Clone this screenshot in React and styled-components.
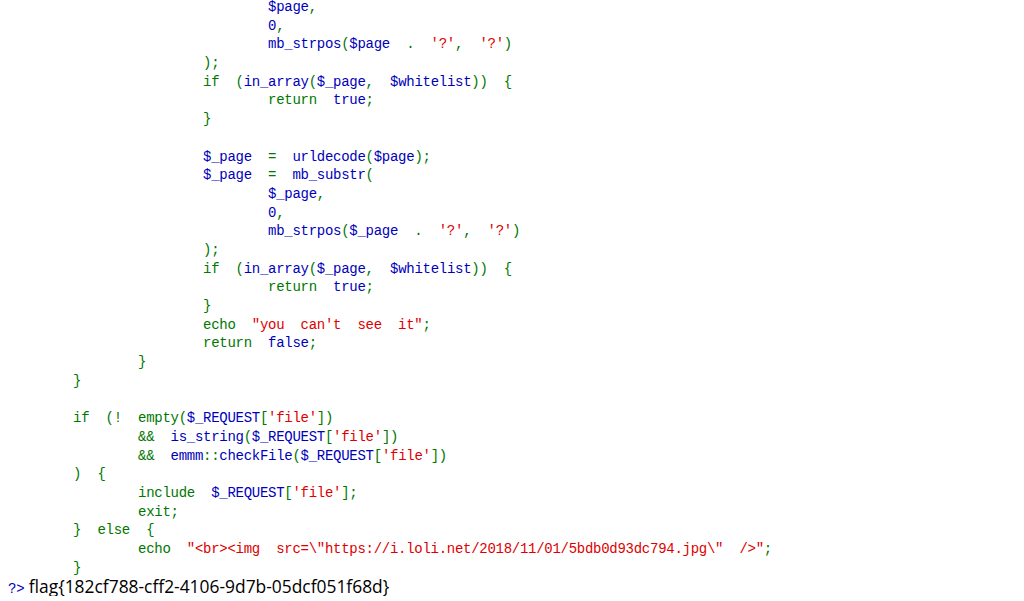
import React from "react";
import styled, { createGlobalStyle } from "styled-components";

const GlobalStyle = createGlobalStyle`
  html, body {
    margin: 0;
    padding: 0;
    background: #ffffff;
    overflow: hidden;
  }
`;

const Page = styled.div`
  padding: 0 8px;
  margin-top: -2px;
`;

const Code = styled.code`
  display: block;
  font-family: "Liberation Mono", "DejaVu Sans Mono", monospace;
  font-size: 14px;
  letter-spacing: -0.275px;
  line-height: 18.7px;
  white-space: pre;
  color: #000000;
`;

const Line = styled.div`
  height: 18.7px;
`;

const COLORS = {
  g: "#007700",
  b: "#0000bb",
  r: "#dd0000",
};

const Token = styled.span`
  color: ${(p) => COLORS[p.$c]};
`;

const Flag = styled.span`
  font-family: "Open Sans", "Noto Sans", sans-serif;
  font-size: 17.4px;
  letter-spacing: 0;
  color: #000000;
  white-space: normal;
`;

const REQ = [["b", "$_REQUEST"], ["g", "["], ["r", "'file'"], ["g", "])"]];

const lines = [
  [4, [["b", "$page"], ["g", ","]]],
  [4, [["b", "0"], ["g", ","]]],
  [4, [["b", "mb_strpos"], ["g", "("], ["b", "$page "], ["g", ". "], ["r", "'?'"], ["g", ", "], ["r", "'?'"], ["g", ")"]]],
  [3, [["g", ");"]]],
  [3, [["g", "if ("], ["b", "in_array"], ["g", "("], ["b", "$_page"], ["g", ", "], ["b", "$whitelist"], ["g", ")) {"]]],
  [4, [["g", "return "], ["b", "true"], ["g", ";"]]],
  [3, [["g", "}"]]],
  [0, []],
  [3, [["b", "$_page "], ["g", "= "], ["b", "urldecode"], ["g", "("], ["b", "$page"], ["g", ");"]]],
  [3, [["b", "$_page "], ["g", "= "], ["b", "mb_substr"], ["g", "("]]],
  [4, [["b", "$_page"], ["g", ","]]],
  [4, [["b", "0"], ["g", ","]]],
  [4, [["b", "mb_strpos"], ["g", "("], ["b", "$_page "], ["g", ". "], ["r", "'?'"], ["g", ", "], ["r", "'?'"], ["g", ")"]]],
  [3, [["g", ");"]]],
  [3, [["g", "if ("], ["b", "in_array"], ["g", "("], ["b", "$_page"], ["g", ", "], ["b", "$whitelist"], ["g", ")) {"]]],
  [4, [["g", "return "], ["b", "true"], ["g", ";"]]],
  [3, [["g", "}"]]],
  [3, [["g", "echo "], ["r", "\"you can't see it\""], ["g", ";"]]],
  [3, [["g", "return "], ["b", "false"], ["g", ";"]]],
  [2, [["g", "}"]]],
  [1, [["g", "}"]]],
  [0, []],
  [1, [["g", "if (! empty("], ...REQ]],
  [2, [["g", "&& "], ["b", "is_string"], ["g", "("], ...REQ]],
  [2, [["g", "&& "], ["b", "emmm"], ["g", "::"], ["b", "checkFile"], ["g", "("], ...REQ]],
  [1, [["g", ") {"]]],
  [2, [["g", "include "], ["b", "$_REQUEST"], ["g", "["], ["r", "'file'"], ["g", "];"]]],
  [2, [["g", "exit;"]]],
  [1, [["g", "} else {"]]],
  [2, [["g", "echo "], ["r", "\"<br><img src=\\\"https://i.loli.net/2018/11/01/5bdb0d93dc794.jpg\\\" />\""], ["g", ";"]]],
  [1, [["g", "}"]]],
];

const wide = (s) => s.replace(/ /g, "  ");

export default function App() {
  return (
    <>
      <GlobalStyle />
      <Page>
        <Code>
          {lines.map(([indent, tokens], i) => (
            <Line key={i}>
              {"        ".repeat(indent)}
              {tokens.map(([c, t], j) => (
                <Token key={j} $c={c}>
                  {wide(t)}
                </Token>
              ))}
            </Line>
          ))}
          <Line>
            <Token $c="b">?&gt;</Token>
            <Flag> flag{"{"}182cf788-cff2-4106-9d7b-05dcf051f68d{"}"}</Flag>
          </Line>
        </Code>
      </Page>
    </>
  );
}
